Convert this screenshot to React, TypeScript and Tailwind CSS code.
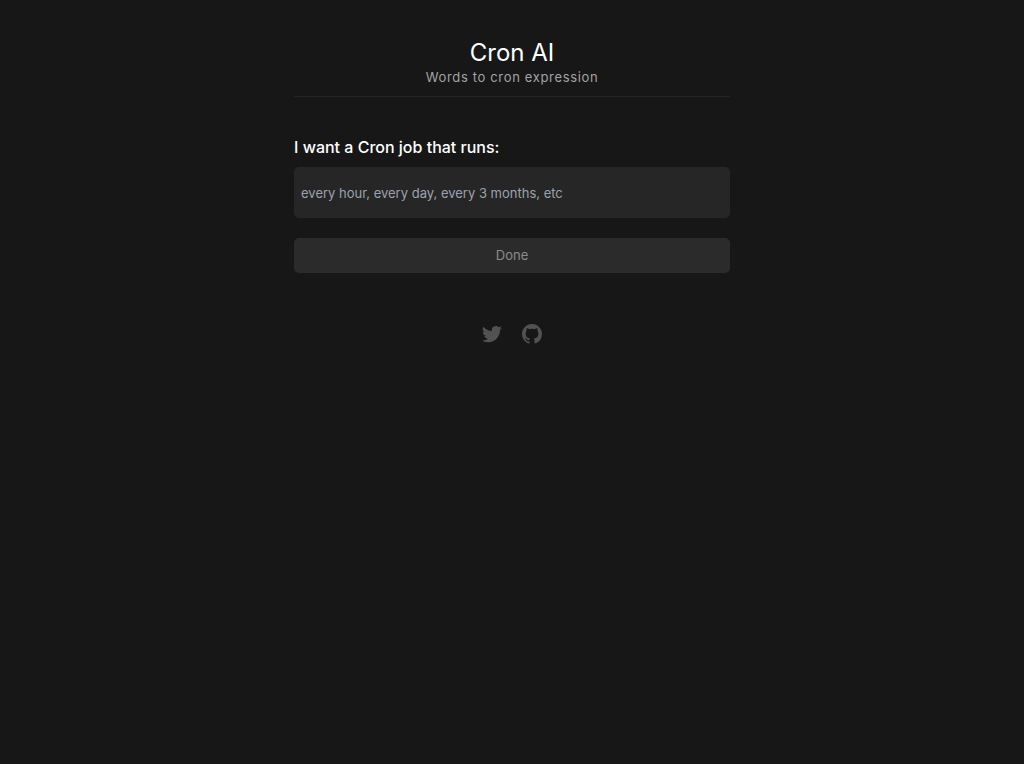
import { useState } from 'react';

const TwitterIcon = () => (
    <svg className="h-6 w-6" fill="currentColor" viewBox="0 0 24 24" aria-hidden="true">
        <path d="M8.29 20.251c7.547 0 11.675-6.253 11.675-11.675 0-.178 0-.355-.012-.53A8.348 8.348 0 0022 5.92a8.19 8.19 0 01-2.357.646 4.118 4.118 0 001.804-2.27 8.224 8.224 0 01-2.605.996 4.107 4.107 0 00-6.993 3.743 11.65 11.65 0 01-8.457-4.287 4.106 4.106 0 001.27 5.477A4.072 4.072 0 012.8 9.713v.052a4.105 4.105 0 003.292 4.022 4.095 4.095 0 01-1.853.07 4.108 4.108 0 003.834 2.85A8.233 8.233 0 012 18.407a11.616 11.616 0 006.29 1.84" />
    </svg>
);

const GitHubIcon = () => (
    <svg className="h-6 w-6" fill="currentColor" viewBox="0 0 24 24" aria-hidden="true">
        <path
            fillRule="evenodd"
            clipRule="evenodd"
            d="M12 2C6.477 2 2 6.484 2 12.017c0 4.425 2.865 8.18 6.839 9.504.5.092.682-.217.682-.483 0-.237-.008-.868-.013-1.703-2.782.605-3.369-1.343-3.369-1.343-.454-1.158-1.11-1.466-1.11-1.466-.908-.62.069-.608.069-.608 1.003.07 1.531 1.032 1.531 1.032.892 1.53 2.341 1.088 2.91.832.092-.647.35-1.088.636-1.338-2.22-.253-4.555-1.113-4.555-4.951 0-1.093.39-1.988 1.029-2.688-.103-.253-.446-1.272.098-2.65 0 0 .84-.27 2.75 1.026A9.564 9.564 0 0112 6.844c.85.004 1.705.115 2.504.337 1.909-1.296 2.747-1.027 2.747-1.027.546 1.379.202 2.398.1 2.651.64.7 1.028 1.595 1.028 2.688 0 3.848-2.339 4.695-4.566 4.943.359.309.678.92.678 1.855 0 1.338-.012 2.419-.012 2.747 0 .268.18.58.688.482A10.019 10.019 0 0022 12.017C22 6.484 17.522 2 12 2z"
        />
    </svg>
);

const App = () => {
    const [prompt, setPrompt] = useState('');

    return (
        <main className="min-h-screen bg-[#171717] px-4 pt-[37px] font-['Inter',sans-serif] text-white">
            <div className="mx-auto max-w-[436px]">
                {/* Header */}
                <header className="border-b border-[#242424] pb-[11px] text-center">
                    <h1 className="text-2xl leading-8">Cron AI</h1>
                    <p className="text-[13px] leading-4 tracking-wider text-[#a3a3a3]">
                        Words to cron expression
                    </p>
                </header>

                {/* Prompt form */}
                <form className="mt-9" onSubmit={(e) => e.preventDefault()}>
                    <label htmlFor="prompt" className="block text-base leading-7 font-medium">
                        I want a Cron job that runs:
                    </label>
                    <input
                        id="prompt"
                        type="text"
                        value={prompt}
                        onChange={(e) => setPrompt(e.target.value)}
                        placeholder="every hour, every day, every 3 months, etc"
                        className="mt-1.5 block h-[51px] w-full rounded-[5px] bg-[#262626] px-[7px] text-[13px] placeholder:text-[#9ca3af] outline-none"
                    />
                    <button
                        type="submit"
                        disabled={!prompt}
                        className="mt-5 block h-[35px] w-full rounded-[5px] bg-[#2b2b2b] text-[13px] text-white disabled:text-[#8c8c8c]"
                    >
                        Done
                    </button>
                </form>

                {/* Social links */}
                <footer className="mt-[49px] flex justify-center gap-4 text-[#525252]">
                    <a href="https://twitter.com" aria-label="Twitter">
                        <TwitterIcon />
                    </a>
                    <a href="https://github.com" aria-label="GitHub">
                        <GitHubIcon />
                    </a>
                </footer>
            </div>
        </main>
    );
};

export default App;
